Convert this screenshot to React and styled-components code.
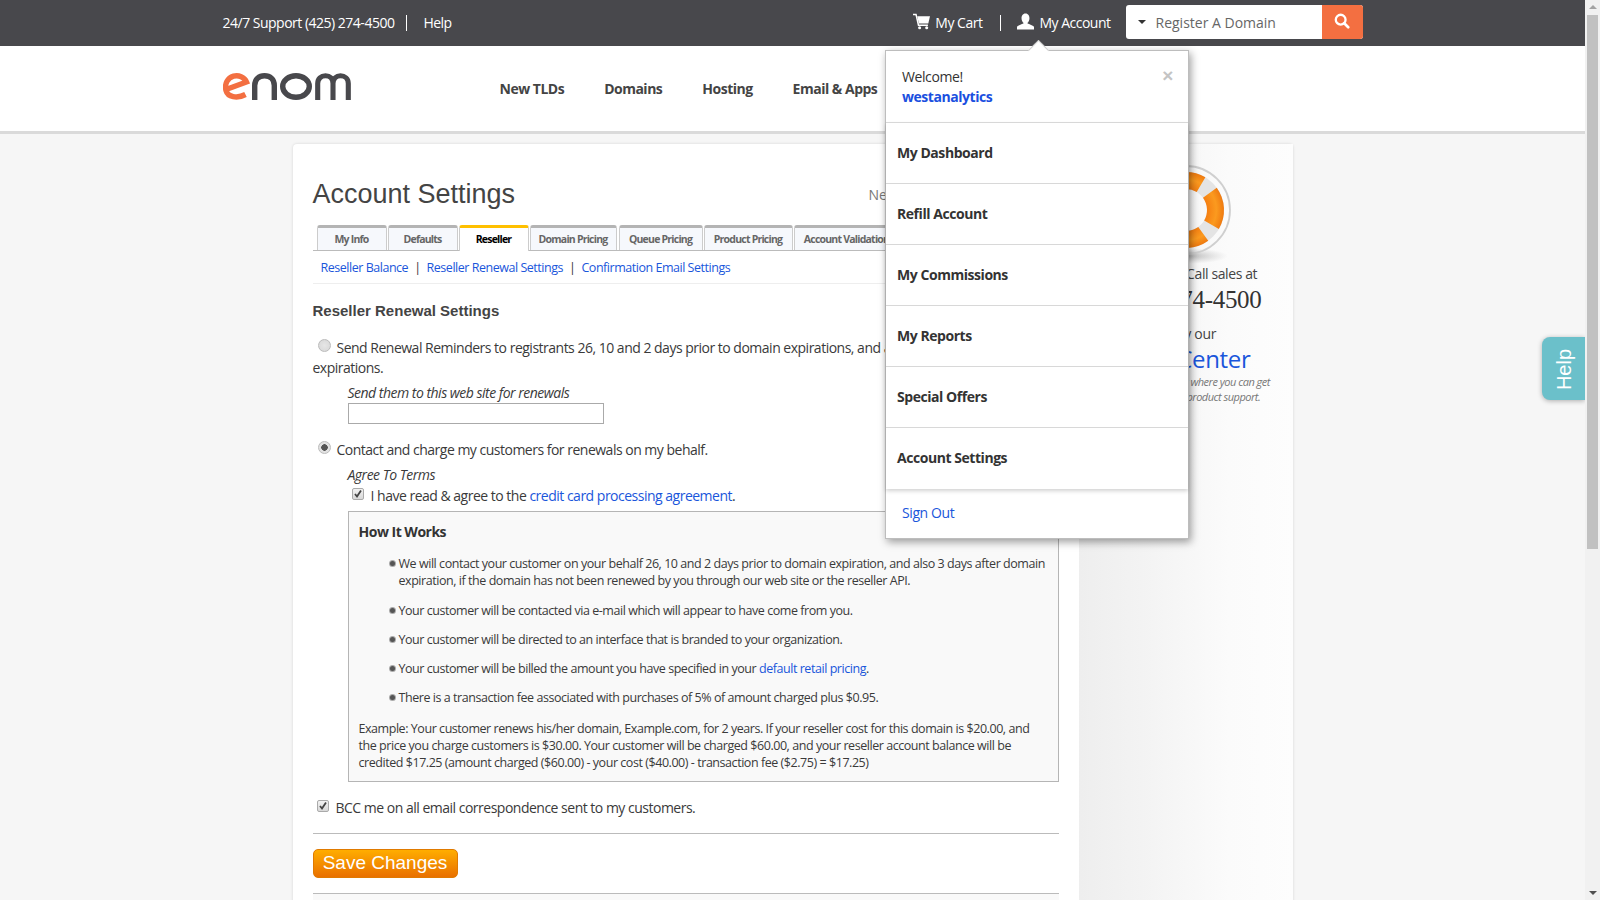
import React from "react";
import styled, { createGlobalStyle } from "styled-components";

const GlobalStyle = createGlobalStyle`
  html, body {
    margin: 0;
    height: 100%;
    overflow: hidden;
  }
  body {
    font-family: "Open Sans", "Liberation Sans", sans-serif;
    color: #333;
    background: #f6f6f6;
  }
  * { box-sizing: border-box; }
  a { color: #1a56db; text-decoration: none; }
`;

const Shell = styled.div`
  display: flex;
  height: 900px;
  overflow: hidden;
`;

const Viewport = styled.div`
  flex: 1;
  min-width: 0;
  position: relative;
  overflow: hidden;
`;

const Track = styled.div`
  width: 15px;
  background: #f1f1f1;
  display: flex;
  flex-direction: column;
  align-items: center;
  padding: 0 2px 0 2px;
`;

const ArrowUp = styled.div`
  margin-top: 5px;
  border-left: 4px solid transparent;
  border-right: 4px solid transparent;
  border-bottom: 4px solid #a3a3a3;
`;

const Thumb = styled.div`
  width: 11px;
  height: 534px;
  margin-top: 6px;
  background: #c1c1c1;
`;

const ArrowDown = styled.div`
  margin-top: auto;
  margin-bottom: 5px;
  border-left: 4px solid transparent;
  border-right: 4px solid transparent;
  border-top: 4px solid #505050;
`;

const TopBar = styled.div`
  height: 46px;
  background: #48484c;
`;

const Container = styled.div`
  width: 1140px;
  margin: 0 auto;
  display: flex;
  align-items: center;
  height: 100%;
`;

const TopText = styled.span`
  color: #fff;
  font-size: 14px;
  letter-spacing: -0.5px;
  line-height: 46px;
`;

const TopDivider = styled.span`
  width: 1px;
  height: 16px;
  background: #fff;
  margin: ${(p) => p.$margin};
`;

const TopRight = styled.div`
  margin-left: auto;
  display: flex;
  align-items: center;
`;

const SearchBox = styled.div`
  width: 237px;
  height: 34px;
  margin: -2px 0 0 15px;
  border-radius: 3px;
  overflow: hidden;
  display: flex;
  background: #fff;
`;

const SearchField = styled.div`
  flex: 1;
  display: flex;
  align-items: center;
  padding-left: 12px;
  font-size: 14px;
  color: #666;
`;

const Caret = styled.span`
  border-left: 4px solid transparent;
  border-right: 4px solid transparent;
  border-top: 4px solid #333;
  margin-right: 10px;
`;

const SearchButton = styled.div`
  width: 41px;
  background: #f36f41;
  display: flex;
  align-items: center;
  justify-content: center;
`;

const Header = styled.div`
  height: 88px;
  background: #fff;
  border-bottom: 3px solid #dadada;
`;

const Logo = styled.svg`
  width: 128px;
  height: 27px;
  margin: -5px 0 0 0;
  flex: none;
`;

const Nav = styled.nav`
  display: flex;
  margin-left: 149px;
  gap: 40px;
`;

const NavItem = styled.span`
  font-size: 14px;
  font-weight: 700;
  color: #444;
  letter-spacing: -0.5px;
`;

const Card = styled.div`
  width: 1000px;
  margin: 10px auto 0;
  background: #fff;
  border-radius: 4px 4px 0 0;
  box-shadow: 0 0 3px rgba(0, 0, 0, 0.14);
  display: grid;
  grid-template-columns: 786px 214px;
  height: 800px;
`;

const Main = styled.div`
  padding: 35px 20px 0;
  min-width: 0;
`;

const TitleRow = styled.div`
  display: flex;
  align-items: center;
  height: 30px;
`;

const Title = styled.h1`
  margin: 0;
  font: 400 27px/30px "Liberation Sans", Arial, sans-serif;
  color: #444;
`;

const TitleNote = styled.span`
  margin-left: auto;
  margin-right: -5px;
  width: 195px;
  font-size: 14px;
  color: #777;
`;

const Tabs = styled.div`
  margin-top: 16px;
  height: 26px;
  padding-left: 4px;
  display: flex;
  border-bottom: 1px solid #bbb;
`;

const Tab = styled.div`
  flex: none;
  width: ${(p) => p.$width}px;
  margin-right: ${(p) => p.$gap}px;
  height: ${(p) => (p.$active ? 26 : 25)}px;
  border: 1px solid #ccc;
  border-bottom: ${(p) => (p.$active ? "none" : "0")};
  border-top: 3px solid ${(p) => (p.$active ? "#ffc000" : "#b4b4b4")};
  border-radius: 3px 3px 0 0;
  background: ${(p) => (p.$active ? "#fff" : "#f6f8fc")};
  color: ${(p) => (p.$active ? "#000" : "#666")};
  font-size: 10.5px;
  font-weight: 700;
  letter-spacing: -0.78px;
  white-space: nowrap;
  overflow: hidden;
  text-align: center;
  line-height: 22px;
`;

const SubNav = styled.div`
  height: 33px;
  padding: 1px 0 0 8px;
  display: flex;
  align-items: center;
  border-bottom: 1px solid #eee;
  font-size: 12.5px;
  letter-spacing: -0.47px;
`;

const SubDivider = styled.span`
  margin: 0 6px;
  color: #333;
`;

const SectionTitle = styled.h2`
  margin: 15px 0 0;
  font: 700 15px/24px "Liberation Sans", Arial, sans-serif;
  color: #444;
`;

const Option = styled.div`
  margin-top: ${(p) => p.$top}px;
  font-size: 14px;
  line-height: 20px;
  letter-spacing: -0.5px;
  color: #3a3a3a;
`;

const Radio = styled.span`
  display: inline-block;
  width: 13px;
  height: 13px;
  margin: 0 6px 0 5px;
  vertical-align: 1px;
  border-radius: 50%;
  border: 1px solid #bbb;
  background: radial-gradient(circle at 50% 50%, ${(p) => (p.$on ? "#555 0 3px, #e2e2e2 3.5px" : "#e6e6e6 0, #d6d6d6 100%")});
`;

const Check = styled.span`
  display: inline-flex;
  align-items: center;
  justify-content: center;
  width: 12px;
  height: 12px;
  margin: ${(p) => p.$margin};
  vertical-align: 2px;
  border: 1px solid #aaa;
  border-radius: 2px;
  background: linear-gradient(#f2f2f2, #d8d8d8);
`;

const FieldLabel = styled.div`
  margin: ${(p) => p.$top}px 0 0 ${(p) => p.$left}px;
  font-size: 14px;
  font-style: italic;
  line-height: 20px;
  letter-spacing: -0.5px;
  color: #3a3a3a;
`;

const TextInput = styled.div`
  width: 256px;
  height: 21px;
  margin-left: 35px;
  border: 1px solid #aaa;
  background: #fff;
`;

const Box = styled.div`
  margin: 5px 0 0 35px;
  padding: 10px 10px 10px;
  border: 1px solid #b5b5b5;
  background: #f9f9f9;
  font-size: 12.5px;
  letter-spacing: -0.45px;
  color: #3a3a3a;
`;

const BoxTitle = styled.div`
  font-size: 14px;
  font-weight: 700;
  line-height: 20px;
  letter-spacing: -0.5px;
  color: #333;
`;

const List = styled.ul`
  list-style: none;
  margin: 13px 0 0;
  padding: 0 0 0 29px;
`;

const ListItem = styled.li`
  display: grid;
  grid-template-columns: 5px 1fr;
  column-gap: 6px;
  line-height: 17.3px;
  margin-bottom: 12px;
  &::before {
    content: "";
    width: 5px;
    height: 5px;
    margin: 6px 0 0 2px;
    border-radius: 50%;
    background: #555;
    box-shadow: 0 0 0 1px #aaa;
  }
`;

const Example = styled.div`
  margin-top: 13px;
  line-height: 17px;
`;

const Rule = styled.div`
  height: 1px;
  margin-top: 15px;
  background: #bbb;
`;

const SaveButton = styled.button`
  display: block;
  width: 145px;
  height: 29px;
  margin-top: 15px;
  padding: 0 0 2px;
  border: 1px solid #e07a00;
  border-radius: 5px;
  background: linear-gradient(#ffad00, #e97000);
  color: #fff;
  font: 400 19px/25px "Liberation Sans", Arial, sans-serif;
`;

const Below = styled.div`
  height: 40px;
  background: #f9f9f9;
`;

const Side = styled.aside`
  background: linear-gradient(90deg, #eeeeee 0, #f4f4f4 35%, #fbfbfb 70%, #fdfdfd 100%);
  padding-top: 19px;
  display: flex;
  flex-direction: column;
  align-items: center;
  text-align: center;
`;

const SideCall = styled.div`
  margin-top: -1px;
  font-size: 14px;
  line-height: 20px;
  letter-spacing: -0.4px;
  color: #444;
  white-space: nowrap;
`;

const SidePhone = styled.div`
  margin-top: 1px;
  font: 400 25px/30px "Liberation Serif", serif;
  letter-spacing: -0.3px;
  color: #333;
`;

const SideTry = styled.div`
  margin-top: 9px;
  font-size: 14px;
  line-height: 20px;
  color: #444;
  letter-spacing: -0.3px;
`;

const SideCenter = styled.a`
  margin-top: -1px;
  font-size: 24px;
  line-height: 31px;
  letter-spacing: -0.3px;
  white-space: nowrap;
`;

const SideNote = styled.div`
  font-size: 11px;
  font-style: italic;
  line-height: 15.3px;
  letter-spacing: -0.5px;
  color: #777;
  white-space: nowrap;
`;

const HelpTab = styled.div`
  position: absolute;
  right: 0;
  top: 337px;
  width: 43px;
  height: 63px;
  padding: 2px 0 0 3px;
  border-radius: 8px 0 0 8px;
  background: #6bc0ca;
  box-shadow: 0 1px 5px rgba(0, 0, 0, 0.3);
  display: flex;
  align-items: center;
  justify-content: center;
`;

const HelpLabel = styled.span`
  transform: rotate(-90deg);
  color: #fff;
  font: 400 20px "Liberation Sans", Arial, sans-serif;
`;

const Dropdown = styled.div`
  position: absolute;
  left: 885px;
  top: 50px;
  width: 304px;
  height: 489px;
  background: #fff;
  border: 1px solid #bdbdbd;
  box-shadow: 2px 3px 8px rgba(0, 0, 0, 0.38);
  &::before {
    content: "";
    position: absolute;
    left: 145px;
    top: -8px;
    width: 14px;
    height: 14px;
    background: #fff;
    border: 1px solid #ccc;
    border-right: 0;
    border-bottom: 0;
    transform: rotate(45deg);
  }
`;

const DropHead = styled.div`
  position: relative;
  height: 72px;
  padding: 16px 16px 0;
  font-size: 14px;
  line-height: 20px;
  letter-spacing: -0.4px;
  color: #333;
  border-bottom: 1px solid #d8d8d8;
`;

const DropUser = styled.a`
  display: block;
  font-weight: 700;
  letter-spacing: -0.45px;
  color: #1a4fe0;
`;

const Close = styled.span`
  position: absolute;
  right: 15px;
  top: 13px;
  font: 700 19px/24px "Liberation Sans", Arial, sans-serif;
  color: #c4c4c4;
`;

const DropList = styled.div`
  box-shadow: 0 2px 4px rgba(0, 0, 0, 0.18);
`;

const DropItem = styled.div`
  height: 61px;
  padding: 0 0 2px 11px;
  display: flex;
  align-items: center;
  font-size: 14px;
  font-weight: 700;
  letter-spacing: -0.45px;
  color: #333;
  border-bottom: ${(p) => (p.$last ? "0" : "1px solid #d8d8d8")};
`;

const SignOut = styled.a`
  display: block;
  padding: 14px 0 0 16px;
  font-size: 14px;
  line-height: 20px;
  letter-spacing: -0.4px;
`;

const tabs = [
  { label: "My Info", width: 70, gap: 1 },
  { label: "Defaults", width: 70, gap: 1 },
  { label: "Reseller", width: 70, gap: 1, active: true },
  { label: "Domain Pricing", width: 87, gap: 2 },
  { label: "Queue Pricing", width: 84, gap: 1 },
  { label: "Product Pricing", width: 89, gap: 1 },
  { label: "Account Validation", width: 106, gap: 0 },
];

const menu = ["My Dashboard", "Refill Account", "My Commissions", "My Reports", "Special Offers", "Account Settings"];

const CartIcon = () => (
  <svg width="17" height="17" viewBox="0 0 18 17" style={{ marginRight: 5, marginTop: -4 }}>
    <path d="M0 1h3.2l2.6 11.5h10" fill="none" stroke="#fff" strokeWidth="1.6" />
    <path d="M4.5 3H18l-1.8 7.5H6.2z" fill="#fff" />
    <circle cx="7" cy="15" r="1.6" fill="#fff" />
    <circle cx="14.5" cy="15" r="1.6" fill="#fff" />
  </svg>
);

const UserIcon = () => (
  <svg width="17" height="17" viewBox="0 0 18 17" style={{ marginRight: 5, marginTop: -3 }}>
    <path d="M9 0c3 0 4.2 2.6 4.2 5 0 2.4-1 4-2.2 5 .2 1.2 5 1.700 7 4v3H0v-3c2-2.300 6.800-2.800 7-4-1.200-1-2.200-2.600-2.200-5C4.800 2.600 6 0 9 0z" fill="#fff" />
  </svg>
);

const SearchIcon = () => (
  <svg width="16" height="16" viewBox="0 0 18 18" style={{ marginTop: -3 }}>
    <circle cx="7.500" cy="7.500" r="5.500" fill="none" stroke="#fff" strokeWidth="2.600" />
    <path d="M11.500 11.500L16 16" stroke="#fff" strokeWidth="3" strokeLinecap="round" />
  </svg>
);

const CheckMark = () => (
  <svg width="10" height="10" viewBox="0 0 10 10">
    <path d="M2 5l2 2.500L8 1.500" fill="none" stroke="#444" strokeWidth="1.800" />
  </svg>
);

const LifeRing = () => (
  <svg width="100" height="102" viewBox="0 0 100 102">
    <defs>
      <radialGradient id="ringShadow">
        <stop offset="0" stopColor="#999" stopOpacity="0.75" />
        <stop offset="1" stopColor="#bbb" stopOpacity="0" />
      </radialGradient>
      <radialGradient id="ringOrange" gradientUnits="userSpaceOnUse" cx="50" cy="47" r="38">
        <stop offset="0.55" stopColor="#f57f12" />
        <stop offset="0.8" stopColor="#fb9a1f" />
        <stop offset="1" stopColor="#ef7a10" />
      </radialGradient>
    </defs>
    <ellipse cx="50" cy="93" rx="42" ry="8" fill="url(#ringShadow)" />
    <circle cx="50" cy="47" r="44" fill="none" stroke="#cfcfcf" strokeWidth="1.800" />
    <circle cx="50" cy="47" r="29.500" fill="none" stroke="#e4e4e4" strokeWidth="17" />
    <circle
      cx="50"
      cy="47"
      r="29.500"
      fill="none"
      stroke="url(#ringOrange)"
      strokeWidth="17"
      strokeDasharray="34 12.350"
      transform="rotate(-36 50 47)"
    />
  </svg>
);

const EnomLogo = () => (
  <Logo viewBox="0 0 128 27" fill="none">
    <path d="M3 16.500L23.500 9C21.500 4 15.500 1.800 10.500 3.200 4.500 5 1.300 11 3 17.500 4.700 24 14 26 22.500 21.500" stroke="#f36f41" strokeWidth="5.400" />
    <path d="M31.700 27V12.500C31.700 6 36 2.800 41.500 2.800S51.300 6 51.300 12.500V27" stroke="#48484c" strokeWidth="5.400" />
    <ellipse cx="73" cy="13.500" rx="13.300" ry="10.800" stroke="#48484c" strokeWidth="5.400" />
    <path d="M94.700 27V10.500C94.700 5.500 98 2.800 102.500 2.800S110 5.500 110 10.500V27M110 10.500C110 5.500 113.300 2.800 117.500 2.800S125.300 5.500 125.300 10.500V27" stroke="#48484c" strokeWidth="5.100" />
  </Logo>
);

const App = () => {
  return (
    <>
      <GlobalStyle />
      <Shell>
        <Viewport>
          <TopBar>
            <Container>
              <TopText>24/7 Support (425) 274-4500</TopText>
              <TopDivider $margin="0 16px 0 12px" />
              <TopText>Help</TopText>
              <TopRight>
                <CartIcon />
                <TopText>My Cart</TopText>
                <TopDivider $margin="0 16px 0 18px" />
                <UserIcon />
                <TopText>My Account</TopText>
                <SearchBox>
                  <SearchField>
                    <Caret />
                    Register A Domain
                  </SearchField>
                  <SearchButton>
                    <SearchIcon />
                  </SearchButton>
                </SearchBox>
              </TopRight>
            </Container>
          </TopBar>

          <Header>
            <Container>
              <EnomLogo />
              <Nav>
                <NavItem>New TLDs</NavItem>
                <NavItem>Domains</NavItem>
                <NavItem>Hosting</NavItem>
                <NavItem>Email &amp; Apps</NavItem>
              </Nav>
            </Container>
          </Header>

          <Card>
            <Main>
              <TitleRow>
                <Title>Account Settings</Title>
                <TitleNote>Need help?</TitleNote>
              </TitleRow>

              <Tabs>
                {tabs.map((t) => (
                  <Tab key={t.label} $width={t.width} $gap={t.gap} $active={t.active}>
                    {t.label}
                  </Tab>
                ))}
              </Tabs>

              <SubNav>
                <a href="#balance">Reseller Balance</a>
                <SubDivider>|</SubDivider>
                <a href="#renewal">Reseller Renewal Settings</a>
                <SubDivider>|</SubDivider>
                <a href="#email">Confirmation Email Settings</a>
              </SubNav>

              <SectionTitle>Reseller Renewal Settings</SectionTitle>

              <Option $top={15}>
                <Radio />
                Send Renewal Reminders to registrants 26, 10 and 2 days prior to domain expirations, and also 3 days after domain expirations.
              </Option>
              <FieldLabel $top={5} $left={35}>Send them to this web site for renewals</FieldLabel>
              <TextInput />

              <Option $top={16}>
                <Radio $on />
                Contact and charge my customers for renewals on my behalf.
              </Option>
              <FieldLabel $top={5} $left={35}>Agree To Terms</FieldLabel>
              <Option $top={1}>
                <Check $margin="0 7px 0 39px"><CheckMark /></Check>
                I have read &amp; agree to the <a href="#terms">credit card processing agreement</a>.
              </Option>

              <Box>
                <BoxTitle>How It Works</BoxTitle>
                <List>
                  <ListItem>
                    <span>We will contact your customer on your behalf 26, 10 and 2 days prior to domain expiration, and also 3 days after domain expiration, if the domain has not been renewed by you through our web site or the reseller API.</span>
                  </ListItem>
                  <ListItem>
                    <span>Your customer will be contacted via e-mail which will appear to have come from you.</span>
                  </ListItem>
                  <ListItem>
                    <span>Your customer will be directed to an interface that is branded to your organization.</span>
                  </ListItem>
                  <ListItem>
                    <span>Your customer will be billed the amount you have specified in your <a href="#retail">default retail pricing</a>.</span>
                  </ListItem>
                  <ListItem>
                    <span>There is a transaction fee associated with purchases of 5% of amount charged plus $0.95.</span>
                  </ListItem>
                </List>
                <Example>
                  Example: Your customer renews his/her domain, Example.com, for 2 years. If your reseller cost for this domain is $20.00, and the price you charge customers is $30.00. Your customer will be charged $60.00, and your reseller account balance will be credited $17.25 (amount charged ($60.00) - your cost ($40.00) - transaction fee ($2.75) = $17.25)
                </Example>
              </Box>

              <Option $top={16}>
                <Check $margin="0 7px 0 4px"><CheckMark /></Check>
                BCC me on all email correspondence sent to my customers.
              </Option>

              <Rule />
              <SaveButton>Save Changes</SaveButton>
              <Rule />
              <Below />
            </Main>

            <Side>
              <LifeRing />
              <SideCall>Need help? Call sales at</SideCall>
              <SidePhone>(425) 274-4500</SidePhone>
              <SideTry>Or try our</SideTry>
              <SideCenter href="#help">Help Center</SideCenter>
              <SideNote>Our resource center where you can get</SideNote>
              <SideNote>free domain and product support.</SideNote>
            </Side>
          </Card>

          <HelpTab>
            <HelpLabel>Help</HelpLabel>
          </HelpTab>

          <Dropdown>
            <DropHead>
              Welcome!
              <DropUser href="#user">westanalytics</DropUser>
              <Close>×</Close>
            </DropHead>
            <DropList>
              {menu.map((m, i) => (
                <DropItem key={m} $last={i === menu.length - 1}>{m}</DropItem>
              ))}
            </DropList>
            <SignOut href="#signout">Sign Out</SignOut>
          </Dropdown>
        </Viewport>
        <Track>
          <ArrowUp />
          <Thumb />
          <ArrowDown />
        </Track>
      </Shell>
    </>
  );
};

export default App;
